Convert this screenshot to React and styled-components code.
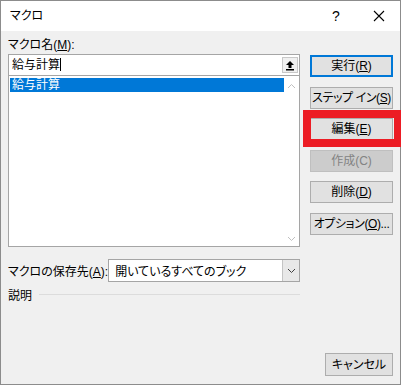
import React from 'react'
import styled, { createGlobalStyle } from 'styled-components';

const GlobalStyle = createGlobalStyle`
    html, body {
        margin: 0;
        padding: 0;
        background: #ffffff;
    }
    body {
        font-family: "Liberation Sans", "Noto Sans CJK JP", sans-serif;
        font-size: 12px;
        font-feature-settings: "palt";
        color: #000;
    }
`

const Window = styled.div`
    width: 401px;
    height: 385px;
    box-sizing: border-box;
    border: 1px solid #8c8c8c;
    background: #f0f0f0;
    display: flex;
    flex-direction: column;
`

const TitleBar = styled.div`
    height: 30px;
    background: #ffffff;
    display: flex;
    align-items: center;
    padding-left: 9px;
    font-size: 12px;
    line-height: 14px;
`

const TitleText = styled.span`
    flex: 1;
`

const TitleControl = styled.div`
    width: ${p => p.w}px;
    height: 30px;
    display: flex;
    align-items: center;
    justify-content: center;
    font-size: 14px;
`

const Body = styled.div`
    flex: 1;
    display: flex;
    padding: 0 7px 8px 7px;
`

const LeftCol = styled.div`
    width: 292px;
    display: flex;
    flex-direction: column;
`

const RightCol = styled.div`
    width: 83px;
    margin-left: 10px;
    padding-top: 24px;
    display: flex;
    flex-direction: column;
    gap: 9.6px;
`

const Label = styled.div`
    margin-top: 6px;
    height: 16px;
    line-height: 16px;
    white-space: nowrap;
`

const NameInput = styled.div`
    margin-top: 1px;
    height: 22px;
    box-sizing: border-box;
    border: 1px solid #a5a5a5;
    background: #ffffff;
    display: flex;
    align-items: center;
    padding-left: 3px;
    padding-right: 1px;
`

const InputText = styled.span`
    flex: 1;
    line-height: 14px;
    &::after {
        content: '';
        display: inline-block;
        width: 1px;
        height: 13px;
        background: #000;
        vertical-align: -2px;
    }
`

const PickButton = styled.div`
    width: 16px;
    height: 16px;
    box-sizing: border-box;
    border: 1px solid #c8c8c8;
    background: #f0f0f0;
    display: flex;
    align-items: center;
    justify-content: center;
`

const List = styled.div`
    margin-top: -1px;
    height: 172px;
    box-sizing: border-box;
    border: 1px solid #a5a5a5;
    background: #ffffff;
    display: flex;
    padding: 2px 0 1px 1px;
`

const ListItems = styled.div`
    flex: 1;
`

const ListItem = styled.div`
    height: 14px;
    line-height: 14px;
    padding-left: 2px;
    background: ${p => p.selected ? '#0078d7' : 'transparent'};
    color: ${p => p.selected ? '#ffffff' : '#000000'};
`

const ScrollBar = styled.div`
    width: 15px;
    display: flex;
    flex-direction: column;
    justify-content: space-between;
    align-items: center;
    padding: 5px 0 3px;
`

const ComboRow = styled.div`
    margin-top: 12px;
    height: 23px;
    display: flex;
    align-items: center;
`

const ComboLabel = styled.div`
    flex: 1;
    white-space: nowrap;
`

const Combo = styled.div`
    width: 196px;
    height: 23px;
    box-sizing: border-box;
    border: 1px solid #a5a5a5;
    background: #ffffff;
    display: flex;
    align-items: stretch;
`

const ComboText = styled.div`
    flex: 1;
    padding-left: 6px;
    display: flex;
    align-items: center;
`

const ComboArrow = styled.div`
    width: 16px;
    background: #e8e8e8;
    border-left: 1px solid #c4c4c4;
    display: flex;
    align-items: center;
    justify-content: center;
`

const GroupRow = styled.div`
    margin-top: 5px;
    height: 14px;
    display: flex;
    align-items: center;
    gap: 7px;
`

const GroupLine = styled.div`
    flex: 1;
    height: 1px;
    background: #dcdcdc;
`

const Button = styled.div`
    position: relative;
    height: 22px;
    box-sizing: border-box;
    border: 1px solid ${p => p.primary ? '#0078d7' : p.disabled ? '#bfbfbf' : '#adadad'};
    box-shadow: ${p => p.primary ? 'inset 0 0 0 1px #0078d7' : 'none'};
    background: ${p => p.disabled ? '#cccccc' : '#e1e1e1'};
    color: ${p => p.disabled ? '#838383' : '#000000'};
    display: flex;
    align-items: center;
    justify-content: center;
    line-height: 14px;
    white-space: nowrap;
    letter-spacing: ${p => p.tight ? '-0.4px' : '0'};
`

const CancelButton = styled(Button)`
    margin-top: auto;
    width: 68px;
    height: 23px;
    align-self: flex-end;
`

const Highlight = styled.div`
    position: absolute;
    top: -9px;
    bottom: -8px;
    left: -8px;
    right: -10px;
    border: 8px solid #ec1c24;
    pointer-events: none;
`

function Chevron({ up, color }) {
    return (
        <svg width="9" height="6" viewBox="0 0 9 6">
            <polyline
                points={up ? "1,5 4.5,1.5 8,5" : "1,1 4.5,4.5 8,1"}
                fill="none"
                stroke={color}
                strokeWidth="1"
            />
        </svg>
    )
}

export default function App () {
    return (
        <>
            <GlobalStyle />
            <Window>
                <TitleBar>
                    <TitleText>マクロ</TitleText>
                    <TitleControl w={44}>?</TitleControl>
                    <TitleControl w={42}>
                        <svg width="12" height="12" viewBox="0 0 12 12">
                            <path d="M1 1 L11 11 M11 1 L1 11" stroke="#000" strokeWidth="1.1" />
                        </svg>
                    </TitleControl>
                </TitleBar>
                <Body>
                    <LeftCol>
                        <Label>マクロ名(<u>M</u>):</Label>
                        <NameInput>
                            <InputText>給与計算</InputText>
                            <PickButton>
                                <svg width="10" height="11" viewBox="0 0 10 11">
                                    <path d="M5 1 L9 5 L6.5 5 L6.5 8 L3.5 8 L3.5 5 L1 5 Z" fill="#000" />
                                    <rect x="1" y="9" width="8" height="1.5" fill="#000" />
                                </svg>
                            </PickButton>
                        </NameInput>
                        <List>
                            <ListItems>
                                <ListItem selected>給与計算</ListItem>
                            </ListItems>
                            <ScrollBar>
                                <Chevron up color="#c0c0c0" />
                                <Chevron color="#c0c0c0" />
                            </ScrollBar>
                        </List>
                        <ComboRow>
                            <ComboLabel>マクロの保存先(<u>A</u>):</ComboLabel>
                            <Combo>
                                <ComboText>開いているすべてのブック</ComboText>
                                <ComboArrow>
                                    <Chevron color="#404040" />
                                </ComboArrow>
                            </Combo>
                        </ComboRow>
                        <GroupRow>
                            <span>説明</span>
                            <GroupLine />
                        </GroupRow>
                    </LeftCol>
                    <RightCol>
                        <Button primary>実行(<u>R</u>)</Button>
                        <Button tight>ステップ イン(<u>S</u>)</Button>
                        <Button>
                            編集(<u>E</u>)
                            <Highlight />
                        </Button>
                        <Button disabled>作成(C)</Button>
                        <Button>削除(<u>D</u>)</Button>
                        <Button tight>オプション(<u>O</u>)...</Button>
                        <CancelButton>キャンセル</CancelButton>
                    </RightCol>
                </Body>
            </Window>
        </>
    )
}
